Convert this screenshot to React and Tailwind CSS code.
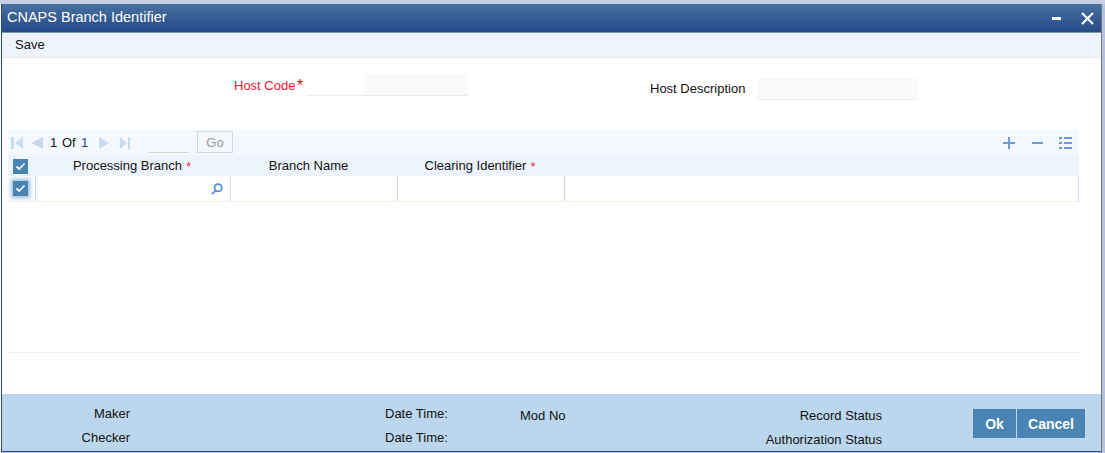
const font = { fontFamily: '"Liberation Sans", Arial, sans-serif' };

const Check = ({ glow }) => (
  <span
    className={`flex h-[15px] w-[15px] items-center justify-center bg-[#4a84b4] ${
      glow ? "shadow-[0_0_4px_2px_rgba(74,132,180,0.55)]" : ""
    }`}
  >
    <svg width="11" height="9" viewBox="0 0 11 9" fill="none">
      <path d="M1.5 4.5 L4.2 7 L9.5 1.5" stroke="#fff" strokeWidth="1.8" />
    </svg>
  </span>
);

const Req = () => (
  <span className="ml-[4px] mt-[2px] text-[13px] leading-none text-[#e8303c]">*</span>
);

const Pager = () => (
  <div className="flex h-[25px] items-center bg-[#f5f8fe] pl-[3px] text-[13px] leading-none">
    <svg width="12" height="12" viewBox="0 0 12 12" fill="#c9dbf0">
      <path d="M0 0h3v12H0zM12 0v12L4 6z" />
    </svg>
    <svg className="ml-[8px]" width="12" height="12" viewBox="0 0 12 12" fill="#c9dbf0">
      <path d="M12 0v12L0 6z" />
    </svg>
    <span className="ml-[7px] w-[7px] text-[#111]">1</span>
    <span className="ml-[5px] w-[14px] text-[#111]">Of</span>
    <span className="ml-[5px] w-[7px] text-[#1a3f8a]">1</span>
    <svg className="ml-[11px]" width="10" height="12" viewBox="0 0 10 12" fill="#c9dbf0">
      <path d="M0 0v12l10-6z" />
    </svg>
    <svg className="ml-[11px]" width="10" height="12" viewBox="0 0 10 12" fill="#c9dbf0">
      <path d="M0 0v12l7-6zM8 0h2v12H8z" />
    </svg>
    <span className="ml-[19px] mt-[1px] h-[22px] w-[40px] self-start border-b border-[#d5d5d5]" />
    <span className="ml-[8px] mt-[1px] flex h-[22px] w-[36px] items-center justify-center self-start border border-[#d4d8de] text-[#999]">
      Go
    </span>
    <div className="ml-auto flex items-center pr-[7px]">
      <svg width="12" height="12" viewBox="0 0 12 12" fill="#6a9ad8">
        <path d="M5 0h2v12H5zM0 5h12v2H0z" />
      </svg>
      <svg className="ml-[17px]" width="11" height="12" viewBox="0 0 11 12" fill="#6a9ad8">
        <path d="M0 5h11v2H0z" />
      </svg>
      <svg className="ml-[16px]" width="13" height="12" viewBox="0 0 13 12" fill="#6a9ad8">
        <path d="M0 0h3v2H0zM5 0h8v2H5zM0 5h3v2H0zM5 5h8v2H5zM0 10h3v2H0zM5 10h8v2H5z" />
      </svg>
    </div>
  </div>
);

const Footer = () => (
  <div className="flex h-[57px] whitespace-nowrap bg-[#bcd7ed] text-[13px] leading-none text-[#111]">
    <div className="flex w-[128px] flex-col items-end pt-[13px]">
      <span className="h-[24px]">Maker</span>
      <span>Checker</span>
    </div>
    <div className="ml-[255px] flex w-[62px] flex-col pt-[13px]">
      <span className="h-[24px]">Date Time:</span>
      <span>Date Time:</span>
    </div>
    <span className="ml-[73px] pt-[15px]">Mod No</span>
    <div className="ml-auto flex w-[200px] flex-col items-end pt-[15px]">
      <span className="h-[24px]">Record Status</span>
      <span>Authorization Status</span>
    </div>
    <div className="ml-[91px] mr-[16px] mt-[15px] flex h-[29px] gap-px text-[14px] font-bold text-white">
      <span className="flex w-[43px] items-center justify-center bg-[#4a84b4]">Ok</span>
      <span className="flex w-[68px] items-center justify-center bg-[#4a84b4]">Cancel</span>
    </div>
  </div>
);

export default function App() {
  return (
    <div className="h-[453px] w-[1105px] overflow-hidden bg-[#b4c2dc]" style={font}>
      <div className="h-[4px] bg-[#c5cee2]" />
      <div className="h-[449px] w-[1102px] border-l border-white">
        <div className="flex h-[448px] w-[1101px] flex-col border-x border-b border-[#2a4d8a] border-r-[#777] bg-white">
          <div className="flex h-[28px] items-center justify-between bg-gradient-to-b from-[#48709f] to-[#264a87] pl-[5px] pr-[7px] text-[14.5px] text-white">
            <span>CNAPS Branch Identifier</span>
            <div className="flex items-center gap-[20px]">
              <span className="h-[3px] w-[9px] bg-white" />
              <svg width="13" height="13" viewBox="0 0 13 13" stroke="#fff" strokeWidth="2.2">
                <path d="M1 1l11 11M12 1L1 12" />
              </svg>
            </div>
          </div>
          <div className="flex h-[26px] items-center border-t border-b border-t-[#7a9aa8] border-b-[#e8e8ec] bg-[#edf4fd] pl-[13px] text-[13px] text-[#111]">
            Save
          </div>
          <div className="flex h-[72px] whitespace-nowrap text-[13px] leading-none">
            <div className="ml-[232px] mt-[16px] flex h-[22px] items-start">
              <span className="mt-[5px] w-[61px] text-[#f0142d]">Host Code</span>
              <span className="ml-[2px] mt-[4px] w-[9px] text-[16px] text-[#f00]">*</span>
              <span className="ml-[1px] flex h-[22px] border-b border-[#ececec]">
                <span className="w-[57px] bg-white" />
                <span className="w-[104px] bg-[#fafafa]" />
              </span>
            </div>
            <div className="ml-[182px] mt-[20px] flex h-[22px] items-start">
              <span className="mt-[4px] w-[95px] text-[#111]">Host Description</span>
              <span className="ml-[12px] h-[22px] w-[160px] border-b border-[#ececec] bg-[#fafafa]" />
            </div>
          </div>
          <div className="ml-[6px] h-[223px] w-[1071px] border-b border-[#f0f0f8]">
            <Pager />
            <div className="flex h-[21px] items-center whitespace-nowrap bg-[#edf4fd] text-[13px] leading-none text-[#111]">
              <div className="flex w-[28px] pl-[5px] pt-[1px]"><Check /></div>
              <div className="flex w-[195px] items-center justify-center pr-[3px]">Processing Branch<Req /></div>
              <div className="flex w-[167px] items-center justify-center pr-[12px]">Branch Name</div>
              <div className="flex w-[167px] items-center justify-center pr-[3px]">Clearing Identifier<Req /></div>
            </div>
            <div className="flex h-[26px] w-[1071px] border-b border-r border-b-[#fdeee0] border-r-[#ccd5e6]">
              <div className="flex w-[28px] items-center border-r border-[#cdd9ec] pl-[5px]"><Check glow /></div>
              <div className="flex w-[195px] items-center justify-end border-r border-[#cdd9ec] pr-[7px]">
                <svg width="12" height="12" viewBox="0 0 12 12" fill="none" stroke="#5b8fd0" strokeWidth="1.8">
                  <circle cx="7.2" cy="4.8" r="3.6" />
                  <path d="M4.6 7.6L1 11.2" />
                </svg>
              </div>
              <div className="w-[167px] border-r border-[#cdd9ec]" />
              <div className="w-[167px] border-r border-[#cdd9ec]" />
            </div>
          </div>
          <div className="h-[41px]" />
          <Footer />
        </div>
      </div>
    </div>
  );
}
